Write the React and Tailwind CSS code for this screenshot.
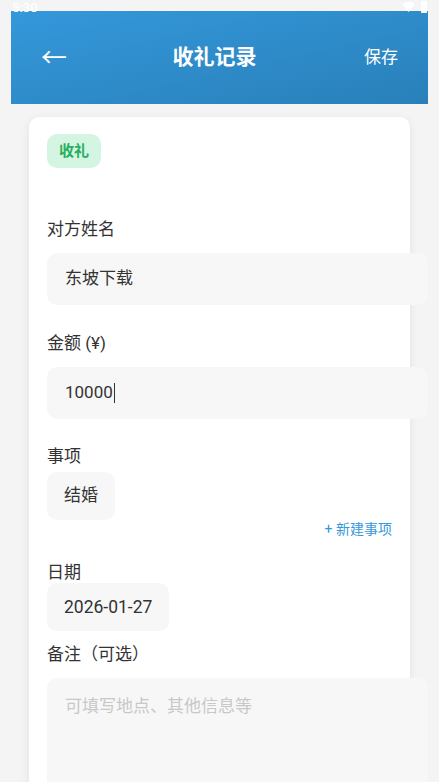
import React from "react";

const font = { fontFamily: '"Roboto", "Noto Sans CJK SC", sans-serif' };

const Label = ({ children, className = "" }) => (
  <p className={`text-[17px] leading-[22px] text-[#333333] ${className}`}>{children}</p>
);

const App = () => {
  return (
    <div className="relative min-h-[782px] w-[439px] overflow-hidden bg-[#f4f4f4]" style={font}>
      {/* status bar */}
      <div className="absolute left-0 top-0 z-10 flex h-[14px] w-full items-center justify-between px-[12px]">
        <span className="text-[13px] font-medium leading-none text-white">5:30</span>
        <div className="flex items-center gap-[6px]">
          <svg width="13" height="10" viewBox="0 0 13 10">
            <path d="M0 2 Q6.5 -2 13 2 L6.5 10 Z" fill="#fff" />
          </svg>
          <div className="h-[12px] w-[6px] rounded-[1px] bg-white" />
        </div>
      </div>

      {/* header */}
      <div className="mx-[11px] mt-[11px] flex h-[93px] items-center justify-between bg-gradient-to-br from-[#3498db] to-[#2980b9] pl-[30px] pr-[30px] text-white">
        <span className="w-[40px] text-[26px] leading-none">←</span>
        <h1 className="pr-[10px] text-[21px] font-bold">收礼记录</h1>
        <span className="w-[40px] text-right text-[17px]">保存</span>
      </div>

      {/* card */}
      <div className="ml-[29px] mt-[13px] w-[381px] rounded-[10px] bg-white px-[18px] pb-[40px] pt-[17px] shadow-[0_2px_8px_rgba(0,0,0,0.08)]">
        <span className="inline-flex h-[34px] w-[54px] items-center justify-center rounded-[10px] bg-[#d5f5e3] text-[15px] font-bold text-[#27ae60]">
          收礼
        </span>

        <Label className="mt-[50px]">对方姓名</Label>
        <div className="mt-[13px] flex h-[52px] w-[381px] items-center rounded-[10px] bg-[#f7f7f7] px-[18px] text-[17px] text-[#333333]">
          东坡下载
        </div>

        <Label className="mt-[27px]">金额 (¥)</Label>
        <div className="mt-[13px] flex h-[52px] w-[381px] items-center rounded-[10px] bg-[#f7f7f7] px-[18px] text-[17px] text-[#333333]">
          10000<span className="ml-[1px] inline-block h-[20px] w-[1px] bg-[#333333]" />
        </div>

        <Label className="mt-[26px]">事项</Label>
        <div className="mt-[5px] flex">
          <div className="flex h-[48px] items-center rounded-[10px] bg-[#f7f7f7] px-[17px] text-[17px] text-[#333333]">
            结婚
          </div>
        </div>
        <div className="flex justify-end">
          <span className="text-[14px] leading-[18px] text-[#3498db]">+ 新建事项</span>
        </div>

        <Label className="mt-[23px]">日期</Label>
        <div className="flex">
          <div className="flex h-[48px] items-center rounded-[10px] bg-[#f7f7f7] px-[17px] text-[17.5px] text-[#333333]">
            2026-01-27
          </div>
        </div>

        <Label className="mt-[12px]">备注（可选）</Label>
        <div className="mt-[13px] h-[150px] w-[381px] rounded-[10px] bg-[#f7f7f7] px-[18px] pt-[16px] text-[17px] text-[#c8c8c8]">
          可填写地点、其他信息等
        </div>
      </div>
    </div>
  );
};

export default App;
